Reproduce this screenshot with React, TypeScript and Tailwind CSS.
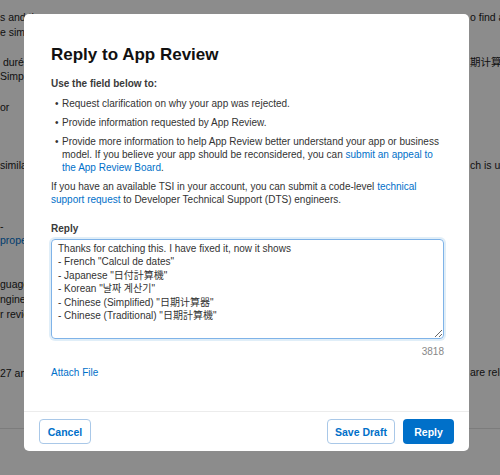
import React from "react";

const font = { fontFamily: '"Liberation Sans", "Noto Sans CJK JP", sans-serif' };

const leftBits = [
  { y: "top-[10px]", t: "s and the" },
  { y: "top-[25px]", t: "e simple" },
  { y: "top-[55px]", t: " durée" },
  { y: "top-[69px]", t: "Simplified" },
  { y: "top-[100px]", t: "or" },
  { y: "top-[158px]", t: "similar" },
  { y: "top-[219px]", t: "-" },
  { y: "top-[233px]", t: "proper", link: true },
  { y: "top-[277px]", t: "guages" },
  { y: "top-[292px]", t: "ngineers" },
  { y: "top-[307px]", t: "r review" },
  { y: "top-[366px]", t: "27 and" },
];

const rightBits = [
  { y: "top-[10px]", t: "o find a" },
  { y: "top-[55px]", t: "期计算" },
  { y: "top-[158px]", t: "ch is us" },
  { y: "top-[365px]", t: "are rele" },
];

const replyText = `Thanks for catching this. I have fixed it, now it shows
- French "Calcul de dates"
- Japanese "日付計算機"
- Korean "날짜 계산기"
- Chinese (Simplified) "日期计算器"
- Chinese (Traditional) "日期計算機"`;

function Bullet({ children }: { children: React.ReactNode }) {
  return (
    <li className="flex">
      <span className="w-[11px] shrink-0 pl-[4px]">•</span>
      <span>{children}</span>
    </li>
  );
}

export default function App() {
  return (
    <div
      className="relative h-[475px] w-[500px] overflow-hidden bg-white text-[10.5px] leading-[14px] text-[#222]"
      style={font}
    >
      {/* page behind the sheet */}
      {leftBits.map((b) => (
        <p
          key={b.t}
          className={`absolute left-0 whitespace-pre ${b.y} ${b.link ? "text-[#0070c9]" : ""}`}
        >
          {b.t}
        </p>
      ))}
      {rightBits.map((b) => (
        <p key={b.t} className={`absolute left-[470px] whitespace-pre ${b.y}`}>
          {b.t}
        </p>
      ))}
      <div className="absolute left-0 right-0 top-[428px] border-t border-[#e2e2e2]" />

      {/* dim overlay */}
      <div className="absolute inset-0 bg-black/45" />

      {/* sheet */}
      <div className="absolute left-[24px] top-[14px] flex h-[437px] w-[445px] flex-col rounded-[5px] bg-white text-[10px] text-[#333]">
        <div className="flex-1 px-[27px] pt-[31px]">
          <h1 className="text-[17px] font-bold leading-[20px] text-[#111]">Reply to App Review</h1>

          <p className="mt-[12px] font-bold leading-[13px] text-[#3a3a3a]">Use the field below to:</p>
          <ul className="mt-[7px] flex flex-col gap-[6px] leading-[13px]">
            <Bullet>Request clarification on why your app was rejected.</Bullet>
            <Bullet>Provide information requested by App Review.</Bullet>
            <Bullet>
              Provide more information to help App Review better understand your app or business
              model. If you believe your app should be reconsidered, you can{" "}
              <a className="text-[#0070c9]">submit an appeal to the App Review Board</a>.
            </Bullet>
          </ul>
          <p className="mt-[6px] leading-[13px]">
            If you have an available TSI in your account, you can submit a code-level{" "}
            <a className="text-[#0070c9]">technical support request</a> to Developer Technical
            Support (DTS) engineers.
          </p>

          <label className="mt-[16px] block font-bold leading-[13px] text-[#3a3a3a]">Reply</label>
          <textarea
            readOnly
            defaultValue={replyText}
            className="mt-[4px] block h-[100px] w-[393px] rounded-[4px] border border-[#7fb3e8] px-[6px] pt-[2px] text-[10px] leading-[13.4px] text-[#333] shadow-[0_0_0_2px_rgba(0,112,201,0.12)] outline-none"
            style={font}
          />
          <p className="mt-[6px] w-[393px] text-right leading-[13px] text-[#888]">3818</p>
          <a className="mt-[8px] block leading-[13px] text-[#0070c9]">Attach File</a>
        </div>

        <div className="flex items-center gap-[8px] border-t border-[#ececec] px-[15px] pb-[7px] pt-[7px]">
          <button className="h-[25px] w-[52px] rounded-[4px] border border-[#a9c8e8] text-[10.5px] font-bold text-[#0070c9]">
            Cancel
          </button>
          <div className="flex-1" />
          <button className="h-[25px] w-[68px] rounded-[4px] border border-[#a9c8e8] text-[10.5px] font-bold text-[#0070c9]">
            Save Draft
          </button>
          <button className="h-[25px] w-[51px] rounded-[4px] bg-[#0070c9] text-[10.5px] font-bold text-white">
            Reply
          </button>
        </div>
      </div>
    </div>
  );
}
